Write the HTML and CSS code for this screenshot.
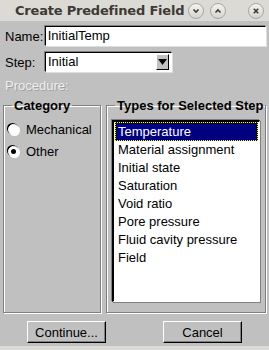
FILE: index.html
```html
<!DOCTYPE html>
<html lang="en">
<head>
  <meta charset="UTF-8">
  <title>Create Predefined Field</title>
  <link rel="stylesheet" href="styles.css">
</head>
<body>
  <div class="window">
    <div class="titlebar">
      <span class="title">Create Predefined Field</span>
      <span class="wbtn wbtn-min">
        <svg width="10" height="10" viewBox="0 0 10 10"><path d="M2.5 3.5 L5 6 L7.5 3.5" fill="none" stroke="#3c3b37" stroke-width="1.6"/></svg>
      </span>
      <span class="wbtn wbtn-max">
        <svg width="10" height="10" viewBox="0 0 10 10"><path d="M2.5 6.5 L5 4 L7.5 6.5" fill="none" stroke="#3c3b37" stroke-width="1.6"/></svg>
      </span>
      <span class="wbtn wbtn-close">
        <svg width="10" height="10" viewBox="0 0 10 10"><path d="M2.8 2.8 L7.2 7.2 M7.2 2.8 L2.8 7.2" fill="none" stroke="#3c3b37" stroke-width="1.6"/></svg>
      </span>
    </div>

    <div class="dialog">
      <div class="row">
        <span class="label">Name:</span>
        <div class="field name-field">InitialTemp</div>
      </div>
      <div class="row">
        <span class="label">Step:</span>
        <div class="field combo">
          <span class="combo-text">Initial</span>
          <span class="combo-arrow">
            <svg width="9" height="6" viewBox="0 0 9 6"><path d="M0 0 H9 L4.5 6 Z" fill="#000"/></svg>
          </span>
        </div>
      </div>
      <div class="procedure">Procedure:</div>

      <div class="groups">
        <fieldset class="group">
          <legend>Category</legend>
          <div class="radios">
            <div class="radio"><span class="dot"></span>Mechanical</div>
            <div class="radio"><span class="dot on"></span>Other</div>
          </div>
        </fieldset>
        <fieldset class="group">
          <legend>Types for Selected Step</legend>
          <div class="list">
            <div class="item selected">Temperature</div>
            <div class="item">Material assignment</div>
            <div class="item">Initial state</div>
            <div class="item">Saturation</div>
            <div class="item">Void ratio</div>
            <div class="item">Pore pressure</div>
            <div class="item">Fluid cavity pressure</div>
            <div class="item">Field</div>
          </div>
        </fieldset>
      </div>

      <div class="buttons">
        <button class="btn">Continue...</button>
        <button class="btn">Cancel</button>
      </div>
    </div>
  </div>
</body>
</html>
```

FILE: styles.css
```css
body {
  margin: 0;
  background-color: #dcdad5;
  font-family: "Liberation Sans", Arial, sans-serif;
  font-size: 13px;
}

.window {
  width: 269px;
  height: 350px;
  display: flex;
  flex-direction: column;
}

.titlebar {
  height: 21px;
  display: flex;
  align-items: center;
  background-color: #dcdad5;
  padding-left: 15px;
}

.title {
  font-family: "DejaVu Sans", sans-serif;
  font-weight: bold;
  font-size: 13px;
  letter-spacing: -0.2px;
  color: #3c3b37;
  white-space: nowrap;
  flex: 1;
  min-width: 0;
}

.wbtn {
  width: 14px;
  height: 14px;
  flex: none;
  border-radius: 50%;
  border: 1px solid #a9a7a2;
  background: linear-gradient(#f4f3f1, #d6d4cf);
  display: flex;
  align-items: center;
  justify-content: center;
}

.wbtn-min { margin-right: 6px; }
.wbtn-max { margin-right: 22px; }
.wbtn-close { margin-right: 5px; }

.dialog {
  background-color: #c0c0c0;
  height: 325px;
  padding: 5px 3px 0 3px;
  box-sizing: border-box;
  display: flex;
  flex-direction: column;
}

.row {
  display: flex;
  align-items: center;
  height: 20px;
  margin-bottom: 6px;
}

.label {
  width: 40px;
  padding-left: 2px;
  color: #000;
}

.field {
  height: 20px;
  box-sizing: border-box;
  background-color: #fff;
  border-top: 1px solid #000;
  border-left: 1px solid #000;
  border-right: 1px solid #fff;
  border-bottom: 1px solid #fff;
  box-shadow: -1px -1px 0 #808080, 1px 1px 0 #dfdfdf;
  padding: 0 2px;
  line-height: 18px;
}

.name-field {
  width: 223px;
}

.combo {
  width: 127px;
  display: flex;
  align-items: center;
}

.combo-text {
  flex: 1;
}

.combo-arrow {
  width: 13px;
  height: 16px;
  box-sizing: border-box;
  background-color: #c0c0c0;
  border-top: 1px solid #fff;
  border-left: 1px solid #fff;
  border-right: 1px solid #000;
  border-bottom: 1px solid #000;
  display: flex;
  align-items: center;
  justify-content: center;
}

.procedure {
  color: #eeeeee;
  text-shadow: 1px 1px 0 #a0a0a0;
  padding-left: 2px;
  height: 20px;
  line-height: 16px;
}

.groups {
  display: grid;
  grid-template-columns: 98px 160px;
  gap: 5px;
  height: 215px;
}

.group {
  margin: 0;
  padding: 0 5px 6px 5px;
  border: 1px solid #808080;
  box-shadow: inset 1px 1px 0 #fff, 1px 1px 0 #fff;
  min-width: 0;
}

.group legend {
  font-weight: bold;
  font-size: 13px;
  line-height: 15px;
  padding: 0 2px;
  margin-left: 3px;
  white-space: nowrap;
  color: #000;
}

.radios {
  margin-top: 5px;
}

.radio {
  display: flex;
  align-items: center;
  height: 22px;
  margin-left: -1px;
}

.dot {
  width: 9px;
  height: 9px;
  border-radius: 50%;
  background-color: #fff;
  border: 1px solid #fff;
  box-shadow: -1px -1px 0 #000, 1px 1px 0 #fff;
  margin-right: 7px;
  display: flex;
  align-items: center;
  justify-content: center;
}

.dot.on::after {
  content: "";
  width: 5px;
  height: 5px;
  border-radius: 50%;
  background-color: #000;
}

.list {
  background-color: #fff;
  border-top: 2px solid #000;
  border-left: 2px solid #000;
  border-right: 1px solid #fff;
  border-bottom: 1px solid #fff;
  box-shadow: -1px -1px 0 #808080, 1px 1px 0 #808080;
  height: 182px;
  box-sizing: border-box;
  margin-top: 7px;
  padding: 0 1px;
}

.item {
  height: 18px;
  line-height: 16px;
  padding-left: 2px;
  border: 1px solid transparent;
  box-sizing: border-box;
}

.item.selected {
  height: 19px;
  line-height: 17px;
  background-color: #000080;
  color: #fff;
  border: 1px dotted #ffff00;
}

.buttons {
  display: flex;
  gap: 57px;
  padding: 8px 0 0 24px;
}

.btn {
  width: 79px;
  height: 22px;
  font-family: "Liberation Sans", Arial, sans-serif;
  font-size: 13px;
  background-color: #c0c0c0;
  border-top: 1px solid #fff;
  border-left: 1px solid #fff;
  border-right: 1px solid #000;
  border-bottom: 1px solid #000;
  box-shadow: inset -1px -1px 0 #808080;
  padding: 0;
  color: #000;
}
```
